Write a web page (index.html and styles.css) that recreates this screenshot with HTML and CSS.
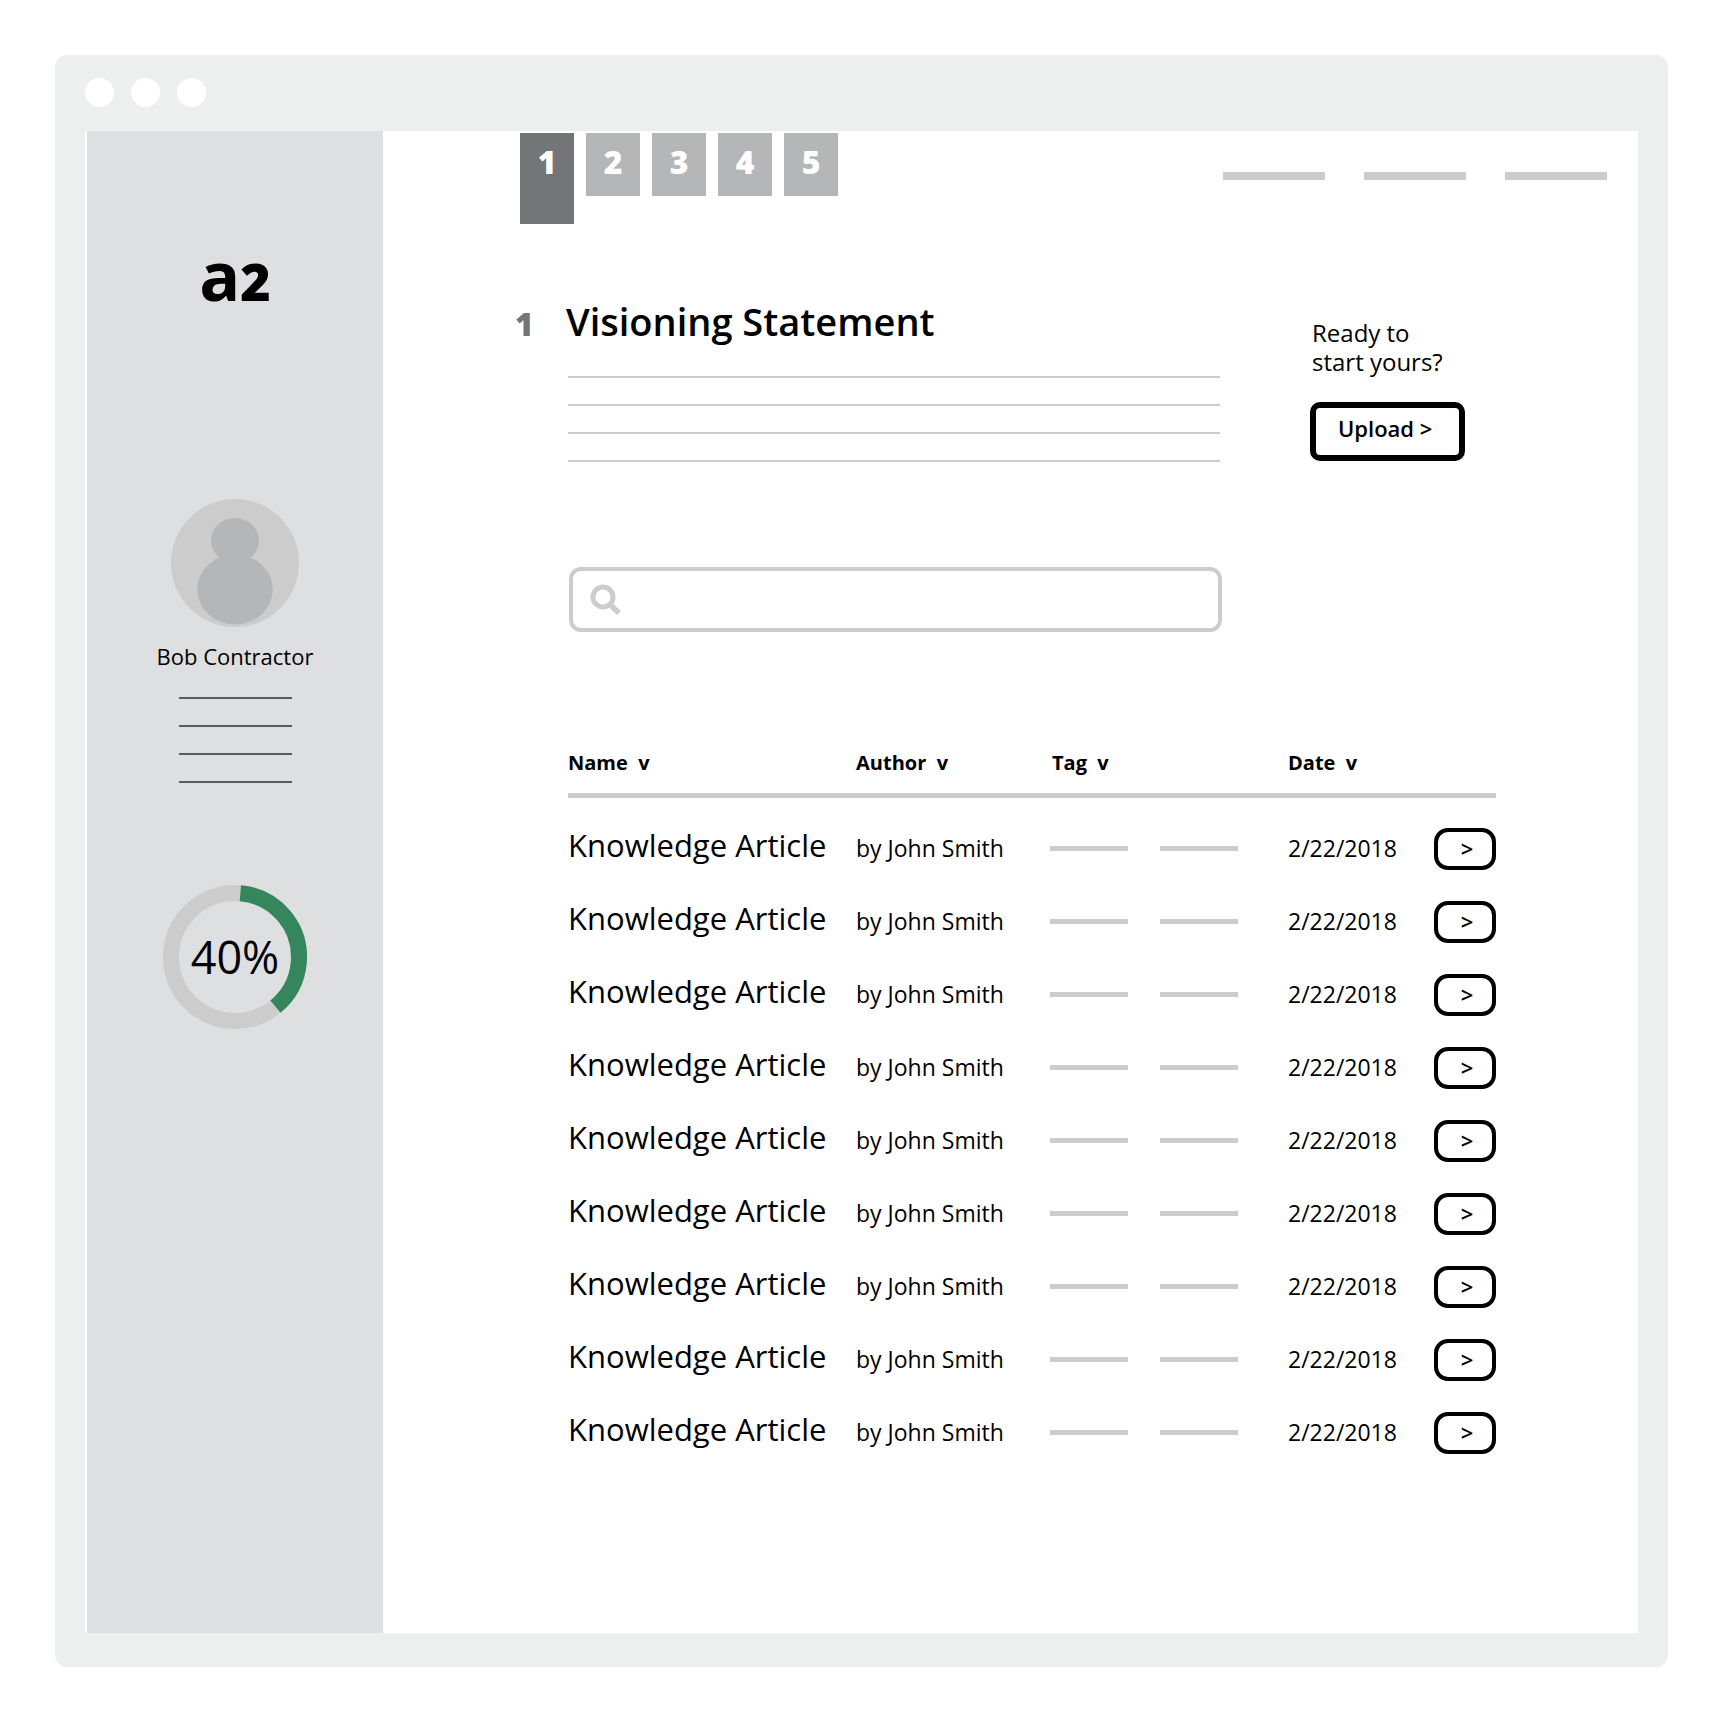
FILE: index.html
```html
<!DOCTYPE html>
<html lang="en">
<head>
<meta charset="utf-8">
<meta name="viewport" content="width=device-width, initial-scale=1">
<title>Visioning Statement</title>
<link rel="stylesheet" href="styles.css">
</head>
<body>
<div class="window">
  <div class="titlebar"><span class="dot"></span><span class="dot"></span><span class="dot"></span></div>
  <div class="screen">
    <aside class="sidebar">
      <div class="logo">a<span class="logo-num">2</span></div>
      <svg class="avatar" viewBox="0 0 128 128" aria-hidden="true">
        <circle cx="64" cy="64" r="64" fill="#cccccc"/>
        <ellipse cx="64" cy="41.5" rx="24" ry="22.5" fill="#b5b6b8"/>
        <ellipse cx="64" cy="90.5" rx="37.8" ry="35" fill="#b5b6b8"/>
      </svg>
      <p class="user-name">Bob Contractor</p>
      <div class="lines user-lines"><span class="line"></span><span class="line"></span><span class="line"></span><span class="line"></span></div>
      <div class="progress">
        <svg class="ring" viewBox="0 0 144 144" aria-hidden="true">
          <circle cx="72" cy="72" r="64" fill="none" stroke="#cccccc" stroke-width="16"/>
          <circle cx="72" cy="72" r="64" fill="none" stroke="#35865c" stroke-width="16" pathLength="360" stroke-dasharray="136 224" transform="rotate(-85.2 72 72)"/>
        </svg>
        <span class="progress-value">40%</span>
      </div>
    </aside>
    <main class="main">
      <header class="topbar">
        <nav class="steps" aria-label="Steps">
          <a class="step step-current" href="#step-1" aria-current="step">1</a>
          <a class="step" href="#step-2">2</a>
          <a class="step" href="#step-3">3</a>
          <a class="step" href="#step-4">4</a>
          <a class="step" href="#step-5">5</a>
        </nav>
        <div class="menu"><span class="menu-item"></span><span class="menu-item"></span><span class="menu-item"></span></div>
      </header>
      <section class="intro">
        <span class="intro-num">1</span>
        <div class="intro-body">
          <h1 class="title">Visioning Statement</h1>
          <div class="lines intro-lines"><span class="line"></span><span class="line"></span><span class="line"></span><span class="line"></span></div>
        </div>
        <div class="cta">
          <p class="cta-text">Ready to<br>start yours?</p>
          <button class="upload" type="button">Upload &gt;</button>
        </div>
      </section>
      <label class="search">
        <svg class="search-icon" viewBox="0 0 32 32" aria-hidden="true">
          <circle cx="13" cy="13" r="10" fill="none" stroke="#cccccc" stroke-width="5"/>
          <path d="M20 20.5L29 29" fill="none" stroke="#cccccc" stroke-width="5.4"/>
        </svg>
        <input class="search-input" type="search" aria-label="Search">
      </label>
      <table class="articles">
        <colgroup><col class="col-name"><col class="col-author"><col class="col-tag"><col class="col-date"><col class="col-open"></colgroup>
        <thead>
          <tr><th>Name&nbsp; v</th><th>Author&nbsp; v</th><th class="tag-head">Tag&nbsp; v</th><th>Date&nbsp; v</th><th></th></tr>
        </thead>
        <tbody>
          <tr><td class="name">Knowledge Article</td><td>by John Smith</td><td class="tag-cell"><div class="tags"><span class="tag"></span><span class="tag"></span></div></td><td>2/22/2018</td><td class="open-cell"><button class="open" type="button">&gt;</button></td></tr>
          <tr><td class="name">Knowledge Article</td><td>by John Smith</td><td class="tag-cell"><div class="tags"><span class="tag"></span><span class="tag"></span></div></td><td>2/22/2018</td><td class="open-cell"><button class="open" type="button">&gt;</button></td></tr>
          <tr><td class="name">Knowledge Article</td><td>by John Smith</td><td class="tag-cell"><div class="tags"><span class="tag"></span><span class="tag"></span></div></td><td>2/22/2018</td><td class="open-cell"><button class="open" type="button">&gt;</button></td></tr>
          <tr><td class="name">Knowledge Article</td><td>by John Smith</td><td class="tag-cell"><div class="tags"><span class="tag"></span><span class="tag"></span></div></td><td>2/22/2018</td><td class="open-cell"><button class="open" type="button">&gt;</button></td></tr>
          <tr><td class="name">Knowledge Article</td><td>by John Smith</td><td class="tag-cell"><div class="tags"><span class="tag"></span><span class="tag"></span></div></td><td>2/22/2018</td><td class="open-cell"><button class="open" type="button">&gt;</button></td></tr>
          <tr><td class="name">Knowledge Article</td><td>by John Smith</td><td class="tag-cell"><div class="tags"><span class="tag"></span><span class="tag"></span></div></td><td>2/22/2018</td><td class="open-cell"><button class="open" type="button">&gt;</button></td></tr>
          <tr><td class="name">Knowledge Article</td><td>by John Smith</td><td class="tag-cell"><div class="tags"><span class="tag"></span><span class="tag"></span></div></td><td>2/22/2018</td><td class="open-cell"><button class="open" type="button">&gt;</button></td></tr>
          <tr><td class="name">Knowledge Article</td><td>by John Smith</td><td class="tag-cell"><div class="tags"><span class="tag"></span><span class="tag"></span></div></td><td>2/22/2018</td><td class="open-cell"><button class="open" type="button">&gt;</button></td></tr>
          <tr><td class="name">Knowledge Article</td><td>by John Smith</td><td class="tag-cell"><div class="tags"><span class="tag"></span><span class="tag"></span></div></td><td>2/22/2018</td><td class="open-cell"><button class="open" type="button">&gt;</button></td></tr>
        </tbody>
      </table>
    </main>
  </div>
</div>
</body>
</html>
```
FILE: styles.css
```css
* { box-sizing: border-box; }

body {
  margin: 0;
  min-height: 100vh;
  padding: 55px 42px 43px 55px;
  display: flex;
  flex-direction: column;
  background: #fff;
  color: #000;
  font-family: "Open Sans", "Noto Sans", sans-serif;
  font-size: 24px;
}

h1, p { margin: 0; font-weight: 400; }
button, input { font: inherit; color: inherit; }

/* Browser frame */
.window {
  flex: 1;
  display: flex;
  flex-direction: column;
  padding: 0 30px 34px;
  border-radius: 12px;
  background: #edefee;
}
.titlebar {
  display: flex;
  gap: 17px;
  padding: 23px 0 24px;
}
.dot {
  width: 29px;
  height: 29px;
  border-radius: 50%;
  background: #fff;
}
.screen {
  flex: 1;
  display: flex;
  padding-left: 2px;
  background: #fff;
}

/* Sidebar */
.sidebar {
  flex: none;
  width: 296px;
  display: flex;
  flex-direction: column;
  align-items: center;
  padding-top: 96px;
  background: #dedfe1;
}
.logo {
  font-size: 68px;
  line-height: 96px;
  font-weight: 700;
}
.logo-num {
  font-size: 52px;
  line-height: 52px;
  font-weight: 800;
}
.avatar {
  width: 128px;
  height: 128px;
  margin-top: 176px;
}
.user-name {
  margin-top: 13px;
  font-size: 22px;
  line-height: 32px;
}
.lines {
  display: flex;
  flex-direction: column;
  gap: 26px;
}
.line {
  height: 2px;
  background: #cccccc;
}
.user-lines {
  width: 113px;
  margin-top: 25px;
}
.user-lines .line { background: #58595b; }
.progress {
  display: grid;
  place-items: center;
  margin-top: 102px;
}
.ring, .progress-value { grid-area: 1 / 1; }
.ring {
  width: 144px;
  height: 144px;
}
.progress-value {
  font-size: 45px;
  line-height: 64px;
}

/* Main column */
.main {
  flex: 1;
  min-width: 0;
}
.topbar {
  display: flex;
  justify-content: space-between;
  align-items: flex-start;
  padding: 2px 31px 0 137px;
}
.steps {
  display: flex;
  align-items: flex-start;
  gap: 12px;
}
.step {
  width: 54px;
  height: 63px;
  padding-top: 9px;
  background: #b5b6b8;
  color: #fff;
  font-size: 32px;
  line-height: 40px;
  font-weight: 800;
  text-align: center;
  text-decoration: none;
}
.step-current {
  height: 91px;
  background: #747577;
}
.menu {
  display: flex;
  gap: 39px;
  padding-top: 39px;
}
.menu-item {
  width: 102px;
  height: 8px;
  background: #cccccc;
}

.intro {
  display: grid;
  grid-template-columns: 51px 1fr 155px;
  align-items: baseline;
  margin-top: 74px;
  padding: 0 173px 0 132px;
}
.intro-num {
  color: #747577;
  font-size: 32px;
  line-height: 40px;
  font-weight: 800;
}
.intro-body { margin-right: 90px; }
.title {
  font-size: 38px;
  line-height: 46px;
  font-weight: 600;
}
.intro-lines {
  margin-top: 32px;
  margin-left: 2px;
}
.cta {
  align-self: start;
  padding-top: 20px;
}
.cta-text {
  padding-left: 2px;
  line-height: 29px;
}
.upload {
  width: 155px;
  height: 59px;
  margin-top: 26px;
  padding: 0 0 8px 22px;
  border: 6px solid #000;
  border-radius: 10px;
  background: #fff;
  font-size: 22px;
  line-height: 32px;
  font-weight: 600;
  text-align: left;
}

.search {
  display: flex;
  align-items: center;
  gap: 16px;
  height: 65px;
  margin: 105px 416px 0 186px;
  padding: 0 17px;
  border: 4px solid #cccccc;
  border-radius: 12px;
}
.search-icon {
  flex: none;
  width: 32px;
  height: 32px;
}
.search-input {
  flex: 1;
  min-width: 0;
  border: 0;
  outline: 0;
  background: none;
}

/* Article list */
.articles {
  width: calc(100% - 327px);
  margin: 116px 142px 0 185px;
  border-collapse: separate;
  border-spacing: 0;
  table-layout: fixed;
}
.col-author { width: 194px; }
.col-tag { width: 238px; }
.col-date { width: 146px; }
.col-open { width: 62px; }
th {
  padding: 0 0 15px;
  border-bottom: 5px solid #cccccc;
  font-size: 20px;
  line-height: 30px;
  font-weight: 700;
  text-align: left;
}
.tag-head { padding-left: 2px; }
tbody::before {
  content: "";
  display: table-row;
  height: 14px;
}
td {
  height: 73px;
  padding: 0;
  font-size: 23px;
  line-height: 48px;
  vertical-align: baseline;
  white-space: nowrap;
}
.name {
  padding-top: 9px;
  font-size: 31px;
}
.tag-cell, .open-cell { vertical-align: middle; }
.tags {
  display: flex;
  gap: 32px;
}
.tag {
  width: 78px;
  height: 5px;
  background: #cccccc;
}
.open {
  display: block;
  width: 62px;
  height: 42px;
  padding: 0 0 2px 4px;
  border: 4px solid #000;
  border-radius: 14px;
  background: #fff;
  font-size: 22px;
  line-height: 32px;
  font-weight: 600;
}
```
